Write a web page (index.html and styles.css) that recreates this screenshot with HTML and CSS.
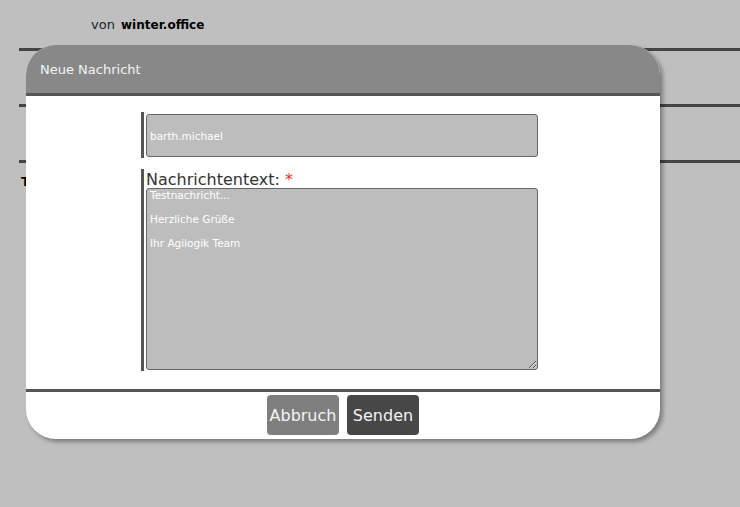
FILE: index.html
```html
<!DOCTYPE html>
<html lang="de">
<head>
    <meta charset="UTF-8">
    <meta name="viewport" content="width=device-width, initial-scale=1.0">
    <title>Nachricht</title>
    <link rel="stylesheet" href="styles.css">
</head>
<body>
    <div class="page">
        <div class="sender">von <strong>winter.office</strong></div>
        <div class="row"></div>
        <div class="row"></div>
        <div class="row"><strong class="row-title">T</strong></div>
    </div>

    <div class="dialog">
        <div class="dialog-header">Neue Nachricht</div>
        <form class="dialog-body" onsubmit="return false">
            <div class="field">
                <input type="text" class="input" value="barth.michael">
            </div>
            <div class="field">
                <label for="msg" class="label">Nachrichtentext: <span class="required">*</span></label>
                <textarea id="msg" class="input textarea">Testnachricht...

Herzliche Grüße

Ihr Agilogik Team</textarea>
            </div>
        </form>
        <div class="dialog-footer">
            <button class="btn btn-cancel">Abbruch</button>
            <button class="btn btn-send">Senden</button>
        </div>
    </div>
</body>
</html>
```

FILE: styles.css
```css
body {
    margin: 0;
    background-color: #bfbfbf;
    font-family: "DejaVu Sans", sans-serif;
    height: 100vh;
    overflow: hidden;
}

.page {
    padding-top: 17px;
}

.sender {
    font-size: 13px;
    color: #222;
    margin-left: 91px;
    height: 31px;
}

.sender strong {
    color: #000;
    font-size: 12px;
    margin-left: 2px;
}

.row {
    margin-left: 19px;
    border-top: 3px solid #444;
    height: 53px;
}

.row-title {
    display: block;
    margin: 11px 0 0 2px;
    font-size: 13px;
    color: #000;
}

/* modal window over the list */
.dialog {
    position: absolute;
    left: 26px;
    top: 45px;
    width: 634px;
    background-color: #fff;
    border-radius: 30px;
    box-shadow: 3px 3px 4px rgba(0, 0, 0, 0.35);
    overflow: hidden;
}

.dialog-header {
    height: 48px;
    line-height: 50px;
    padding-left: 14px;
    background-color: #888;
    border-bottom: 3px solid #555;
    color: #f4f4f4;
    font-size: 13px;
}

.dialog-body {
    padding: 16px 0 18px 115px;
}

.field {
    border-left: 3px solid #555;
    padding: 2px 0 1px 2px;
    width: 392px;
    margin-bottom: 11px;
}

.field:last-child {
    margin-bottom: 0;
    padding-top: 0;
}

.input {
    display: block;
    box-sizing: border-box;
    width: 392px;
    height: 43px;
    margin: 0;
    padding: 0 3px;
    background-color: #bdbdbd;
    border: 1px solid #666;
    border-radius: 3px;
    color: #fff;
    font-family: "DejaVu Sans", sans-serif;
    font-size: 10.5px;
    outline: none;
}

.label {
    display: block;
    height: 19px;
    font-size: 16px;
    line-height: 21px;
    color: #333;
}

.required {
    color: #e03030;
}

.textarea {
    height: 182px;
    padding-top: 0;
    line-height: 12px;
    resize: vertical;
}

.dialog-footer {
    display: flex;
    justify-content: center;
    gap: 8px;
    padding: 3px 0 4px;
    border-top: 3px solid #555;
}

.btn {
    width: 72px;
    height: 40px;
    padding: 0;
    border: none;
    border-radius: 4px;
    color: #f4f4f4;
    font-family: "DejaVu Sans", sans-serif;
    font-size: 16px;
    cursor: pointer;
}

.btn-cancel {
    background-color: #7f7f7f;
}

.btn-send {
    background-color: #474747;
}
```
